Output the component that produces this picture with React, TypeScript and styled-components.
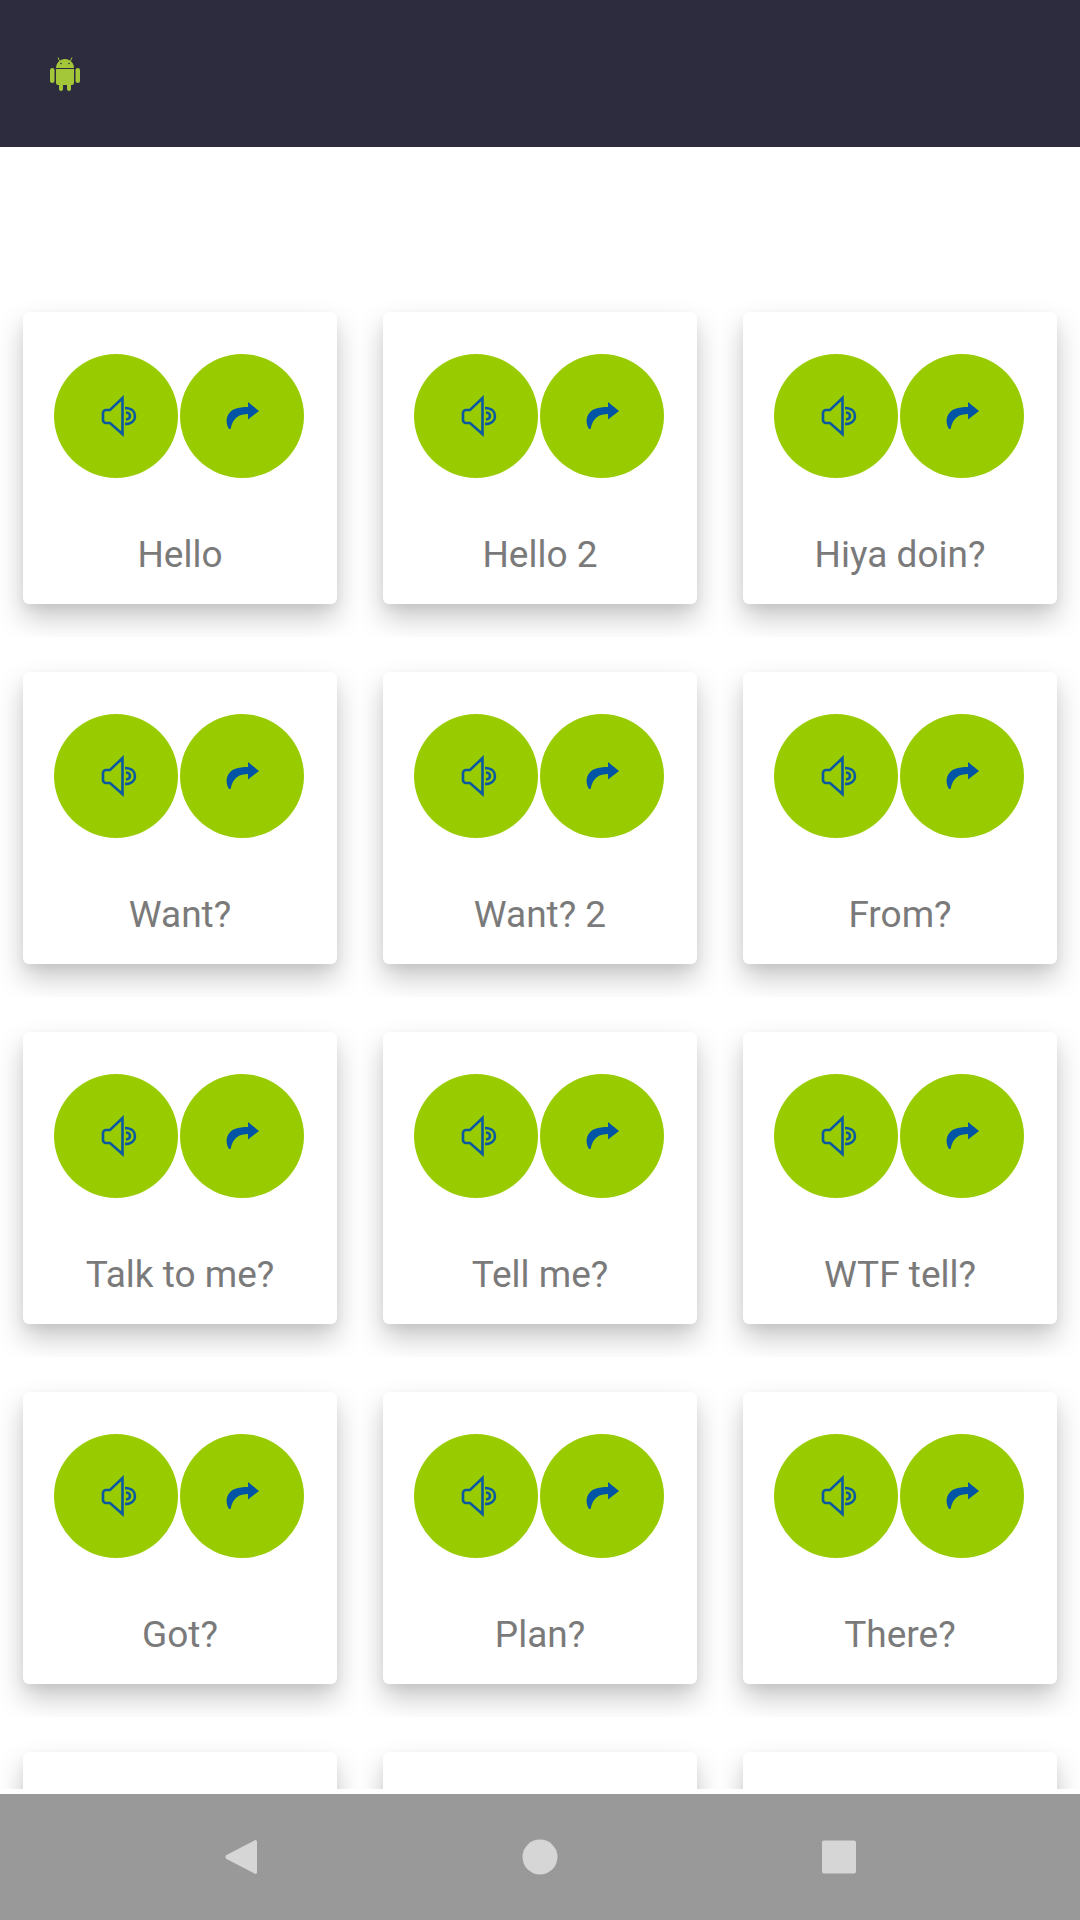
import { FC } from 'react';
import styled, { createGlobalStyle } from 'styled-components';

const GlobalStyle = createGlobalStyle`
   html, body {
      margin: 0;
      padding: 0;
      background: #fff;
   }
   * {
      box-sizing: border-box;
   }
`;

const Screen = styled.div`
   width: 1080px;
   height: 1920px;
   display: flex;
   flex-direction: column;
   overflow: hidden;
   font-family: Roboto, "Liberation Sans", sans-serif;
`;

const Header = styled.header`
   height: 147px;
   flex: none;
   display: flex;
   align-items: center;
   padding-left: 50px;
   background: #2d2b3e;
`;

const SoundList = styled.main`
   flex: 1;
   min-height: 0;
   margin: 130px 0 5px;
   overflow: hidden;
   display: grid;
   grid-template-columns: repeat(3, 360px);
   grid-auto-rows: 360px;
`;

const Cell = styled.div`
   padding: 35px 23px 33px;
   overflow: hidden;
`;

const Card = styled.div`
   height: 292px;
   display: flex;
   flex-direction: column;
   align-items: center;
   padding-top: 42px;
   background: #fff;
   border-radius: 6px;
   box-shadow: 0 14px 28px rgba(0, 0, 0, 0.22), 0 4px 10px rgba(0, 0, 0, 0.05);
`;

const Buttons = styled.div`
   display: flex;
   gap: 2px;
   margin-left: -2px;
`;

const RoundButton = styled.div`
   width: 124px;
   height: 124px;
   display: flex;
   align-items: center;
   justify-content: center;
   border-radius: 50%;
   background: #99cc00;
`;

const Label = styled.div`
   margin-top: 56px;
   font-size: 37px;
   line-height: 42px;
   color: #7a7a7a;
   white-space: nowrap;
`;

const NavBar = styled.nav`
   height: 126px;
   flex: none;
   display: flex;
   align-items: center;
   justify-content: center;
   gap: 263px;
   background: #999;
`;

const NavIcon = styled.svg`
   width: 36px;
   height: 36px;
   fill: #d6d6d6;
`;

const Android = () => (
   <svg width="30" height="35" viewBox="0 0 30 35" fill="#a4c639">
      <rect x="0" y="12" width="4.5" height="15" rx="2.25" />
      <rect x="25.5" y="12" width="4.5" height="15" rx="2.25" />
      <path d="M6 13h18v14a2 2 0 0 1-2 2h-1v4a2 2 0 0 1-4 0v-4h-4v4a2 2 0 0 1-4 0v-4H8a2 2 0 0 1-2-2z" />
      <path d="M6 12C6 7 10 3 15 3s9 4 9 9z" />
      <path d="M9.5 4.8 8 1.5M20.5 4.8 22 1.5" stroke="#a4c639" strokeWidth="1" />
      <circle cx="11" cy="7.5" r="0.8" fill="#2d2b3e" />
      <circle cx="19" cy="7.5" r="0.8" fill="#2d2b3e" />
   </svg>
);

const Speaker = () => (
   <svg width="48" height="48" viewBox="0 0 48 48" fill="none" stroke="#0b5aa0" strokeWidth="2.6">
      <path d="M30.5 6V42L18 31H14a3 3 0 0 1-3-3v-7a3 3 0 0 1 3-3H18Z" />
      <path d="M33 16C40 16 43 20 43 24C43 28 40 32 33 32" />
      <path d="M34 20.5Q38 21 38 24Q38 27 34 27.5" />
   </svg>
);

const Share = () => (
   <svg width="48" height="48" viewBox="0 0 48 48" fill="#0254a4">
      <path d="M11 37C8 32 8 27 10 23C13 17 20 15 30 15V10L41 19L30 27.5V22C22 22 15 25 12.5 37Z" />
   </svg>
);

const sounds = [
   'Hello', 'Hello 2', 'Hiya doin?',
   'Want?', 'Want? 2', 'From?',
   'Talk to me?', 'Tell me?', 'WTF tell?',
   'Got?', 'Plan?', 'There?',
   '', '', '',
];

interface SoundCardProps {
   name: string;
}

const SoundCard: FC<SoundCardProps> = ({ name }) => (
   <Cell>
      <Card>
         <Buttons>
            <RoundButton><Speaker /></RoundButton>
            <RoundButton><Share /></RoundButton>
         </Buttons>
         <Label>{name}</Label>
      </Card>
   </Cell>
);

const App: FC = () => (
   <Screen>
      <GlobalStyle />
      <Header>
         <Android />
      </Header>
      <SoundList>
         {sounds.map((name, i) => (
            <SoundCard key={i} name={name} />
         ))}
      </SoundList>
      <NavBar>
         <NavIcon viewBox="0 0 36 36">
            <path d="M34 2.5V33.5a1.5 1.5 0 0 1-2.5 1L3.5 20a2.5 2.5 0 0 1 0-4L31.5 1.5A1.5 1.5 0 0 1 34 2.5Z" />
         </NavIcon>
         <NavIcon viewBox="0 0 36 36">
            <circle cx="18" cy="18" r="17.5" />
         </NavIcon>
         <NavIcon viewBox="0 0 36 36">
            <rect x="1" y="1.5" width="34" height="33" rx="2" />
         </NavIcon>
      </NavBar>
   </Screen>
);

export default App;
